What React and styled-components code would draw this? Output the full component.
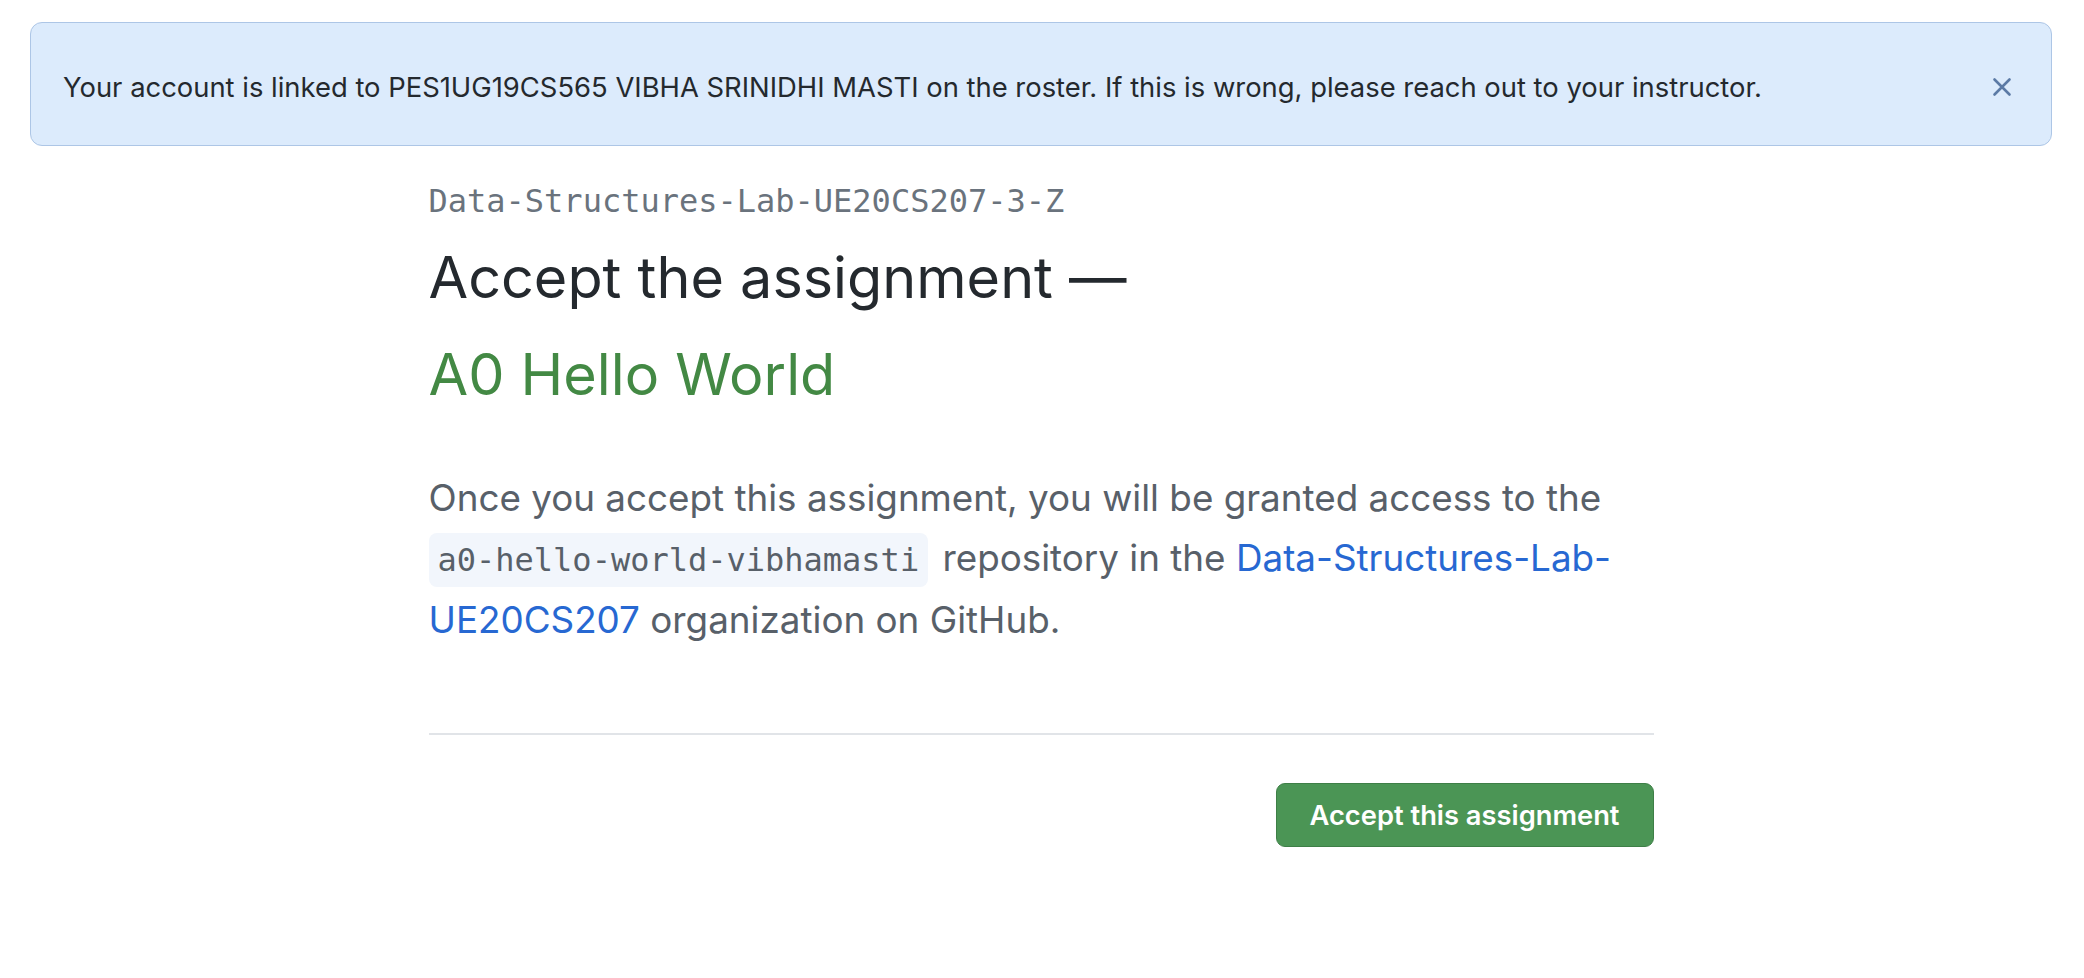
import React from "react";
import styled, { createGlobalStyle } from "styled-components";

const GlobalStyle = createGlobalStyle`
  html, body {
    margin: 0;
    padding: 0;
    background: #ffffff;
  }
  body {
    font-family: Inter, "Noto Sans", "Liberation Sans", sans-serif;
    color: #24292e;
    -webkit-font-smoothing: antialiased;
  }
  * { box-sizing: border-box; }
`;

const Page = styled.div`
  padding: 22px 32px 60px 30px;
`;

const Flash = styled.div`
  display: flex;
  align-items: center;
  min-height: 124px;
  padding: 6px 38px 0 32px;
  background: #dcebfc;
  border: 1px solid #adc6e6;
  border-radius: 12px;
`;

const FlashText = styled.p`
  margin: 0;
  flex: 1;
  font-size: 27.4px;
  line-height: 40px;
  color: #24292e;
`;

const CloseButton = styled.button`
  display: flex;
  align-items: center;
  justify-content: center;
  width: 22px;
  height: 22px;
  padding: 0;
  border: 0;
  background: transparent;
  color: #5b7aa5;
  cursor: pointer;
`;

const Main = styled.main`
  width: 1225px;
  margin: 31px auto 0;
`;

const OrgName = styled.div`
  font-family: "DejaVu Sans Mono", "Liberation Mono", monospace;
  font-size: 32px;
  line-height: 48px;
  color: #6a737d;
`;

const Title = styled.h1`
  margin: 4px 0 0;
  font-size: 57.5px;
  font-weight: 400;
  line-height: 97px;
  color: #24292e;
`;

const AssignmentName = styled.span`
  color: #438944;
`;

const Lead = styled.p`
  margin: 45px 0 0;
  font-size: 36.8px;
  line-height: 60px;
  color: #586069;
`;

const Code = styled.code`
  display: inline;
  padding: 8px 9px;
  font-family: "DejaVu Sans Mono", "Liberation Mono", monospace;
  font-size: 32px;
  background: #f2f6fc;
  border-radius: 8px;
  color: #586069;
  margin-right: 4px;
`;

const OrgLink = styled.a`
  color: #2768d2;
  text-decoration: none;
`;

const Divider = styled.hr`
  margin: 83px 0 0;
  border: 0;
  height: 2px;
  background: #e1e4e8;
`;

const Actions = styled.div`
  display: flex;
  justify-content: flex-end;
  margin-top: 48px;
`;

const Button = styled.button`
  height: 64px;
  padding: 0 33px;
  font-family: Inter, "Noto Sans", sans-serif;
  font-size: 27.3px;
  font-weight: 600;
  color: #ffffff;
  background: #4b9555;
  border: 1px solid #3e7f47;
  border-radius: 9px;
  cursor: pointer;
`;

const XIcon = () => (
  <svg width="20" height="20" viewBox="0 0 20 20" fill="none" stroke="currentColor" strokeWidth="2.6" strokeLinecap="round">
    <path d="M2.5 2.5l15 15M17.5 2.5l-15 15" />
  </svg>
);

export default function App() {
  return (
    <>
      <GlobalStyle />
      <Page>
        <Flash>
          <FlashText>
            Your account is linked to PES1UG19CS565 VIBHA SRINIDHI MASTI on the roster. If this is wrong, please reach out to your instructor.
          </FlashText>
          <CloseButton aria-label="Dismiss">
            <XIcon />
          </CloseButton>
        </Flash>
        <Main>
          <OrgName>Data-Structures-Lab-UE20CS207-3-Z</OrgName>
          <Title>
            Accept the assignment —<br />
            <AssignmentName>A0 Hello World</AssignmentName>
          </Title>
          <Lead>
            Once you accept this assignment, you will be granted access to the{" "}
            <Code>a0-hello-world-vibhamasti</Code> repository in the{" "}
            <OrgLink href="#">Data-Structures-Lab-UE20CS207</OrgLink> organization on GitHub.
          </Lead>
          <Divider />
          <Actions>
            <Button>Accept this assignment</Button>
          </Actions>
        </Main>
      </Page>
    </>
  );
}
